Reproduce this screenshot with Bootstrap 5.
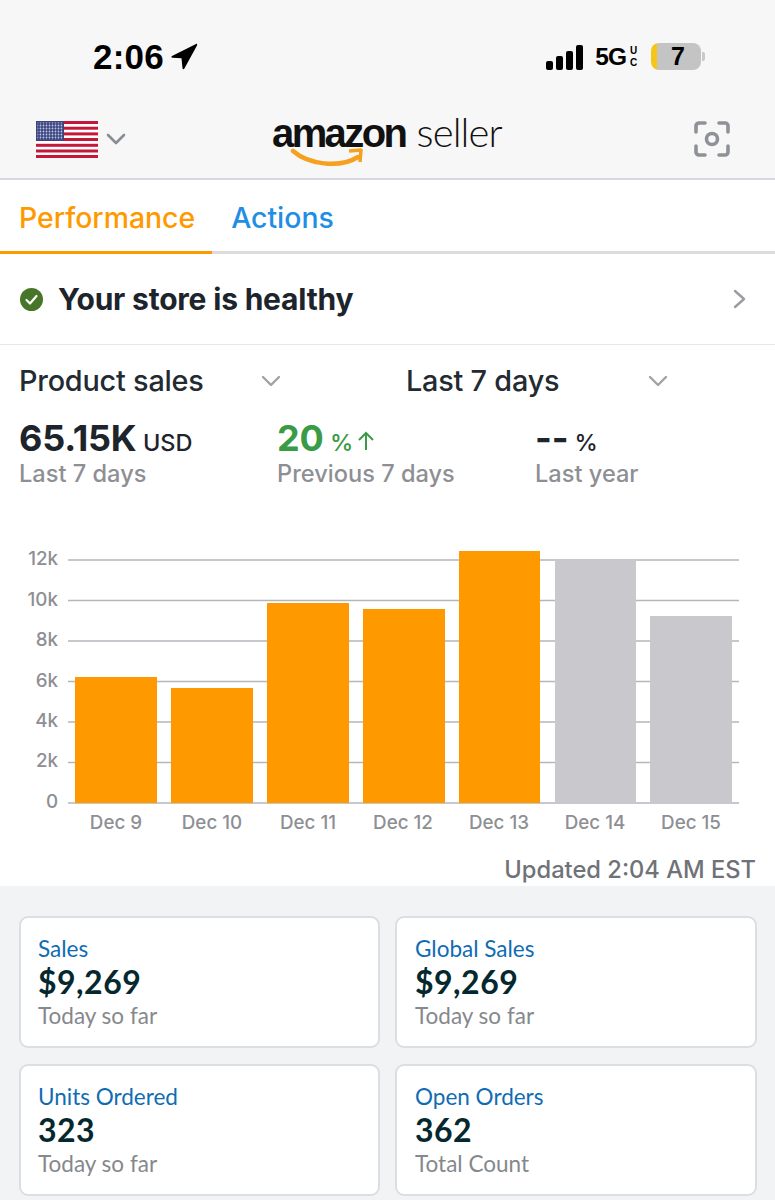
<!DOCTYPE html>
<html lang="en">
<head>
    <meta charset="UTF-8">
    <meta name="viewport" content="width=device-width, initial-scale=1.0">
    <title>Amazon Seller</title>
    <link href="https://cdn.jsdelivr.net/npm/bootstrap@5.3.0/dist/css/bootstrap.min.css" rel="stylesheet">
    <style>
        body { width: 775px; height: 1200px; overflow: hidden; background: #fff; font-family: Inter, "Liberation Sans", sans-serif; color: #1d242c; }
        .app-top { height: 180px; background: #f7f7f7; border-bottom: 2px solid #d5d8dc; }
        .status-line { height: 100px; padding: 30px 70px 0 93px; }
        .clock { font-family: "Liberation Sans", sans-serif; font-weight: 700; font-size: 35px; line-height: 54px; color: #000; letter-spacing: .2px; }
        .net-label { font-family: "Liberation Sans", sans-serif; font-weight: 700; font-size: 24.500px; line-height: 26px; color: #000; letter-spacing: -1px; margin-left: 10px; }
        .net-uc { font-family: "Liberation Sans", sans-serif; font-weight: 700; font-size: 10px; line-height: 11.600px; color: #000; width: 11px; margin-left: 2px; text-align: center; }
        .battery { width: 50px; height: 27px; border-radius: 8px; padding-left: 4px; background: linear-gradient(90deg, #f5c518 0 6px, #c4c4c4 6px); font-family: "Liberation Sans", sans-serif; font-weight: 700; font-size: 25px; line-height: 27px; color: #000; text-align: center; margin-left: 12px; }
        .battery-tip { width: 3px; height: 9px; border-radius: 0 2px 2px 0; background: #c9c9c9; margin-left: 1px; }
        .logo-row { height: 78px; padding: 0 45px 0 36px; }
        .logo-box { width: 232px; margin-left: 146px; height: 62px; position: relative; }
        .logo-word { font-size: 40px; line-height: 52px; color: #111; white-space: nowrap; margin-top: -2px; }
        .logo-word b { font-family: "Liberation Sans", sans-serif; font-weight: 700; letter-spacing: -2.6px; }
        .logo-word span { font-family: Lato, sans-serif; font-weight: 300; margin-left: 0; letter-spacing: -.9px; }
        .logo-smile { position: absolute; left: 18px; top: 40px; }
        .tab-row { height: 74px; border-bottom: 3px solid #dcdcdc; }
        .tab-item { font-size: 28.400px; font-weight: 500; line-height: 76px; height: 74px; padding: 0 17px 0 19px; white-space: nowrap; }
        .tab-on { color: #ff9900; border-bottom: 3px solid #ff9900; }
        .tab-off { color: #1f8ee5; }
        .health-row { height: 91px; border-bottom: 1px solid #e7e7e9; padding: 0 28px 0 20px; }
        .health-text { font-size: 30px; font-weight: 700; color: #1d242c; margin-left: 15px; letter-spacing: -.2px; }
        .picker-row { padding: 16px 0 0 19px; height: 72px; }
        .picker-one { width: 387px; height: 40px; }
        .picker-last { width: auto; }
        .picker-label { font-size: 28.800px; font-weight: 500; line-height: 40px; color: #232a31; letter-spacing: -.2px; }
        .picker-a { width: 242px; }
        .metric-row { padding: 1px 0 0 19px; height: 116px; }
        .metric-col { flex: 0 0 258px; }
        .metric-big { font-size: 36px; font-weight: 700; line-height: 40px; letter-spacing: -.2px; white-space: nowrap; }
        .metric-unit { font-size: 23.500px; font-weight: 500; margin-left: -2px; letter-spacing: 0; }
        .metric-arrow { margin-left: -5px; }
        .metric-sub { font-size: 23.600px; font-weight: 500; line-height: 30px; color: #8e8f94; margin-top: -4px; }
        .metric-green { color: #3a9b46; }
        .chart-svg { display: block; }
        .chart-svg text { font-family: Inter, sans-serif; font-weight: 500; fill: #8e8f94; }
        .updated-line { font-size: 23.700px; font-weight: 500; line-height: 30px; color: #6f7277; padding: 0 19px 1px 0; margin-top: -2px; }
        .tiles-area { background: #f2f3f5; padding: 30px 18px 0 19px; height: 320px; }
        .tile { height: 132px; background: #fff; border: 2px solid #dcdee1; border-radius: 9px; padding: 17px 17px; font-family: Lato, sans-serif; }
        .tile:nth-child(even) { padding-left: 18px; }
        .tile-title { font-size: 22.500px; line-height: 27px; color: #0f6cb3; }
        .tile-num { font-size: 32px; font-weight: 700; line-height: 39px; letter-spacing: .5px; color: #04282e; }
        .tile-sub { font-size: 22.500px; line-height: 30px; color: #85888c; }
        .tile-grid { display: grid; grid-template-columns: 361px 362px; gap: 16px 15px; }
    </style>
</head>
<body>

    <div class="app-top">
        <div class="status-line d-flex justify-content-between align-items-start">
            <div class="d-flex align-items-center">
                <span class="clock">2:06</span>
                <svg width="28" height="28" viewBox="0 0 28 28" style="margin-left:6px"><path d="M26 1 2 13c-1 .6-.7 1.600.4 1.700l9.100.6 1 10c.2 1.300 1.400 1.300 1.900.2L27 2.500C27.500 1.300 26.900.5 26 1z" fill="#000"/></svg>
            </div>
            <div class="d-flex align-items-center" style="margin-top:13px">
                <svg width="40" height="26" viewBox="0 0 40 26"><rect x="1" y="17" width="7" height="9" rx="2"/><rect x="11" y="12" width="7" height="14" rx="2"/><rect x="21" y="7" width="7" height="19" rx="2"/><rect x="31" y="1" width="7" height="25" rx="2"/></svg>
                <span class="net-label">5G</span>
                <span class="net-uc">U<br>C</span>
                <span class="battery">7</span>
                <span class="battery-tip"></span>
            </div>
        </div>
        <div class="logo-row d-flex align-items-center">
            <svg width="62" height="37" viewBox="0 0 62 37">
                <defs>
                    <pattern id="starDots" width="3" height="3" patternUnits="userSpaceOnUse"><rect width="3" height="3" fill="#3b4580"/><circle cx="1.500" cy="1.500" r=".9" fill="#c3c8e2"/></pattern>
                </defs>
                <rect width="62" height="37" fill="#fff"/>
                <g fill="#c4173a">
                    <rect width="62" height="3"/><rect y="5.700" width="62" height="3"/><rect y="11.400" width="62" height="3"/><rect y="17" width="62" height="3"/><rect y="22.800" width="62" height="3"/><rect y="28.500" width="62" height="3"/><rect y="34" width="62" height="3"/>
                </g>
                <rect width="28" height="20" fill="#3b4580"/>
                <rect x="1.500" y="1.500" width="25" height="17" fill="url(#starDots)"/>
            </svg>
            <svg width="20" height="12" viewBox="0 0 20 12" class="ms-2" fill="none"><path d="M2 2l8 8 8-8" stroke="#8a8d93" stroke-width="2.600" stroke-linecap="round" stroke-linejoin="round"/></svg>
            <div class="logo-box">
                <div class="logo-word"><b>amazon</b> <span>seller</span></div>
                <svg class="logo-smile" width="76" height="26" viewBox="0 0 76 26" fill="none"><path d="M3 3c15 13 46 18 65 6" stroke="#f5a01f" stroke-width="4.500" stroke-linecap="round"/><path d="M59 3l12-1-1 12" stroke="#f5a01f" stroke-width="3.500" stroke-linejoin="round"/></svg>
            </div>
            <svg width="36" height="36" viewBox="0 0 36 36" class="ms-auto" fill="none" stroke="#8e9197" stroke-width="3.600" stroke-linecap="round" stroke-linejoin="round"><path d="M2 11V5a3 3 0 0 1 3-3h6M25 2h6a3 3 0 0 1 3 3v6M34 25v6a3 3 0 0 1-3 3h-6M11 34H5a3 3 0 0 1-3-3v-6"/><circle cx="18" cy="18" r="5.500"/></svg>
        </div>
    </div>

    <div class="tab-row d-flex">
        <div class="tab-item tab-on">Performance</div>
        <div class="tab-item tab-off">Actions</div>
    </div>

    <div class="health-row d-flex align-items-center">
        <svg width="23" height="23" viewBox="0 0 23 23"><circle cx="11.500" cy="11.500" r="11.500" fill="#47762a"/><path d="M6.500 12l3.500 3.500 6.500-7.500" fill="none" stroke="#fff" stroke-width="2.200" stroke-linecap="round" stroke-linejoin="round"/></svg>
        <span class="health-text">Your store is healthy</span>
        <svg width="14" height="20" viewBox="0 0 14 20" class="ms-auto" fill="none"><path d="M2 2l9 8-9 8" stroke="#9a9ca1" stroke-width="2.400" stroke-linecap="round" stroke-linejoin="round"/></svg>
    </div>

    <div class="picker-row d-flex">
        <div class="picker-one d-flex align-items-center">
            <span class="picker-label picker-a">Product sales</span>
            <svg width="20" height="12" viewBox="0 0 20 12" fill="none"><path d="M2 2l8 8 8-8" stroke="#a0a2a7" stroke-width="2.400" stroke-linecap="round" stroke-linejoin="round"/></svg>
        </div>
        <div class="picker-one picker-last d-flex align-items-center">
            <span class="picker-label picker-a">Last 7 days</span>
            <svg width="20" height="12" viewBox="0 0 20 12" fill="none"><path d="M2 2l8 8 8-8" stroke="#a0a2a7" stroke-width="2.400" stroke-linecap="round" stroke-linejoin="round"/></svg>
        </div>
    </div>

    <div class="metric-row d-flex">
        <div class="metric-col">
            <div class="metric-big">65.15K <span class="metric-unit">USD</span></div>
            <div class="metric-sub">Last 7 days</div>
        </div>
        <div class="metric-col">
            <div class="metric-big metric-green">20 <span class="metric-unit">%</span>
                <svg class="metric-arrow" width="18" height="20" viewBox="0 0 18 20" fill="none"><path d="M9 19V2M2 9l7-7 7 7" stroke="#3a9b46" stroke-width="2"/></svg>
            </div>
            <div class="metric-sub">Previous 7 days</div>
        </div>
        <div class="metric-col">
            <div class="metric-big">-- <span class="metric-unit">%</span></div>
            <div class="metric-sub">Last year</div>
        </div>
    </div>

    <svg class="chart-svg" width="775" height="324" viewBox="0 533 775 324">
        <g stroke="#b4b6bc" stroke-width="1.600">
            <line x1="68" y1="560" x2="739" y2="560"/>
            <line x1="68" y1="600.500" x2="739" y2="600.500"/>
            <line x1="68" y1="641" x2="739" y2="641"/>
            <line x1="68" y1="681.500" x2="739" y2="681.500"/>
            <line x1="68" y1="722" x2="739" y2="722"/>
            <line x1="68" y1="762.500" x2="739" y2="762.500"/>
            <line x1="68" y1="803" x2="739" y2="803"/>
        </g>
        <g fill="#ff9900">
            <rect x="75" y="677" width="82" height="126"/>
            <rect x="171" y="688" width="82" height="115"/>
            <rect x="267" y="603" width="82" height="200"/>
            <rect x="363" y="609" width="82" height="194"/>
            <rect x="459" y="551" width="81" height="252"/>
        </g>
        <g fill="#c8c8cd">
            <rect x="555" y="560" width="81" height="243"/>
            <rect x="650" y="616" width="82" height="187"/>
        </g>
        <g font-size="18.800" text-anchor="end">
            <text x="58" y="565">12k</text>
            <text x="58" y="606">10k</text>
            <text x="58" y="646">8k</text>
            <text x="58" y="687">6k</text>
            <text x="58" y="727">4k</text>
            <text x="58" y="767">2k</text>
            <text x="58" y="808">0</text>
        </g>
        <g font-size="18.800" text-anchor="middle">
            <text x="116" y="829">Dec 9</text>
            <text x="212" y="829">Dec 10</text>
            <text x="308" y="829">Dec 11</text>
            <text x="403" y="829">Dec 12</text>
            <text x="499" y="829">Dec 13</text>
            <text x="595" y="829">Dec 14</text>
            <text x="691" y="829">Dec 15</text>
        </g>
    </svg>

    <div class="updated-line text-end">Updated 2:04 AM EST</div>

    <div class="tiles-area">
        <div class="tile-grid">
            <div class="tile">
                <div class="tile-title">Sales</div>
                <div class="tile-num">$9,269</div>
                <div class="tile-sub">Today so far</div>
            </div>
            <div class="tile">
                <div class="tile-title">Global Sales</div>
                <div class="tile-num">$9,269</div>
                <div class="tile-sub">Today so far</div>
            </div>
            <div class="tile">
                <div class="tile-title">Units Ordered</div>
                <div class="tile-num">323</div>
                <div class="tile-sub">Today so far</div>
            </div>
            <div class="tile">
                <div class="tile-title">Open Orders</div>
                <div class="tile-num">362</div>
                <div class="tile-sub">Total Count</div>
            </div>
        </div>
    </div>

    <script src="https://cdn.jsdelivr.net/npm/bootstrap@5.3.0/dist/js/bootstrap.bundle.min.js"></script>
</body>
</html>
